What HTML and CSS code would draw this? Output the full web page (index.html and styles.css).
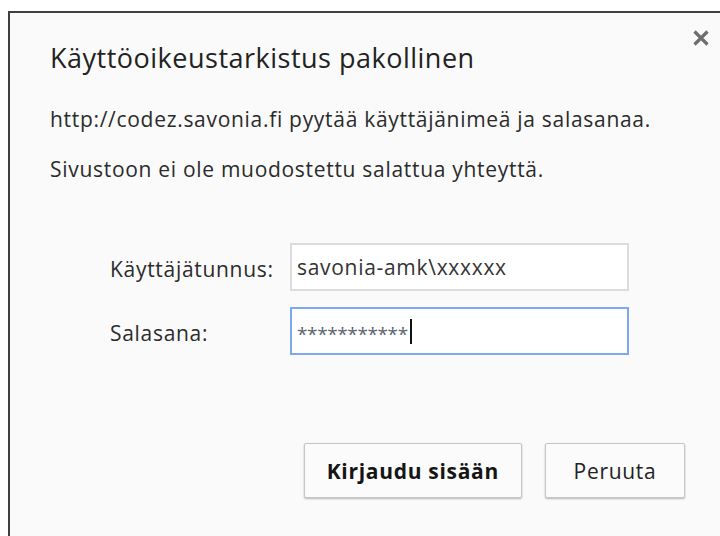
FILE: index.html
```html
<!DOCTYPE html>
<html lang="fi">
<head>
<meta charset="utf-8">
<title>Käyttöoikeustarkistus pakollinen</title>
<link rel="stylesheet" href="styles.css">
</head>
<body>
<div class="screen">
  <section class="dialog" role="dialog" aria-labelledby="auth-title">
    <header class="dialog-head">
      <h1 id="auth-title" class="dialog-title">Käyttöoikeustarkistus pakollinen</h1>
      <button class="close" type="button" aria-label="Sulje">
        <svg viewBox="0 0 18 18" width="18" height="18" aria-hidden="true">
          <path d="M2.5 2.5 L15.5 15.5 M15.5 2.5 L2.5 15.5" />
        </svg>
      </button>
    </header>
    <p class="msg msg-first">http://codez.savonia.fi pyytää käyttäjänimeä ja salasanaa.</p>
    <p class="msg msg-second">Sivustoon ei ole muodostettu salattua yhteyttä.</p>

    <div class="form">
      <span class="label">Käyttäjätunnus:</span>
      <div class="field"><span class="field-text">savonia-amk\xxxxxx</span></div>
      <span class="label">Salasana:</span>
      <div class="field field-focus"><span class="field-stars">***********</span><span class="caret"></span></div>
    </div>

    <div class="actions">
      <button class="btn btn-primary" type="button">Kirjaudu sisään</button>
      <button class="btn btn-cancel" type="button">Peruuta</button>
    </div>
  </section>
</div>
</body>
</html>
```

FILE: styles.css
```css
html, body {
  margin: 0;
  padding: 0;
  background: #ffffff;
  overflow: hidden;
  height: 100%;
}

.screen {
  padding: 11px 0 0 8px;
  height: 100%;
  box-sizing: border-box;
}

.dialog {
  height: 100%;
  box-sizing: border-box;
  background: #fafafa;
  border-top: 2px solid #404040;
  border-left: 2px solid #404040;
  padding: 0 10px 0 40px;
  font-family: "Open Sans", "Noto Sans", sans-serif;
  color: #2b2b2b;
}

.dialog-head {
  display: flex;
  justify-content: space-between;
  align-items: flex-start;
}

.dialog-title {
  margin: 30px 0 0 0;
  font-size: 27px;
  line-height: 30px;
  letter-spacing: 0.5px;
  font-weight: 400;
  color: #222;
}

.close {
  margin: 16px 0 0 0;
  padding: 0;
  border: 0;
  background: none;
  width: 18px;
  height: 18px;
}

.close svg {
  display: block;
}

.close path {
  stroke: #6e6e6e;
  stroke-width: 3.2;
  fill: none;
}

.msg {
  margin: 0;
  font-size: 21px;
  line-height: 24px;
  letter-spacing: 0.7px;
  color: #2b2b2b;
}

.msg-first {
  margin-top: 34px;
}

.msg-second {
  margin-top: 26px;
}

.form {
  margin: 62px 0 0 60px;
  display: grid;
  grid-template-columns: 180px 339px;
  row-gap: 16px;
  align-items: center;
}

.label {
  font-size: 21px;
  line-height: 24px;
  letter-spacing: 0.7px;
  color: #2b2b2b;
  padding-top: 3px;
}

.field {
  height: 48px;
  box-sizing: border-box;
  background: #ffffff;
  border: 2px solid #dcdcdc;
  padding: 0 5px;
  display: flex;
  align-items: center;
  font-size: 21px;
  letter-spacing: 0.7px;
  color: #333;
}

.field-focus {
  border-color: #7ea8f2;
}

.field-stars {
  color: #5d6470;
  font-size: 19px;
  line-height: 24px;
  letter-spacing: -0.4px;
  transform: translateY(3px);
}

.caret {
  display: inline-block;
  width: 2px;
  height: 25px;
  background: #111;
  margin-left: 2px;
}

.actions {
  margin: 88px 25px 0 0;
  display: flex;
  justify-content: flex-end;
  gap: 23px;
}

.btn {
  height: 55px;
  min-width: 140px;
  padding: 0 22px;
  box-sizing: border-box;
  font-family: "Open Sans", "Noto Sans", sans-serif;
  font-size: 21px;
  letter-spacing: 0.7px;
  color: #222;
  background: #fbfbfb;
  border: 1px solid #c6c6c6;
  border-radius: 2px;
  box-shadow: 0 1px 2px rgba(0, 0, 0, 0.28);
}

.btn-primary {
  font-weight: 700;
  color: #151515;
}
```
